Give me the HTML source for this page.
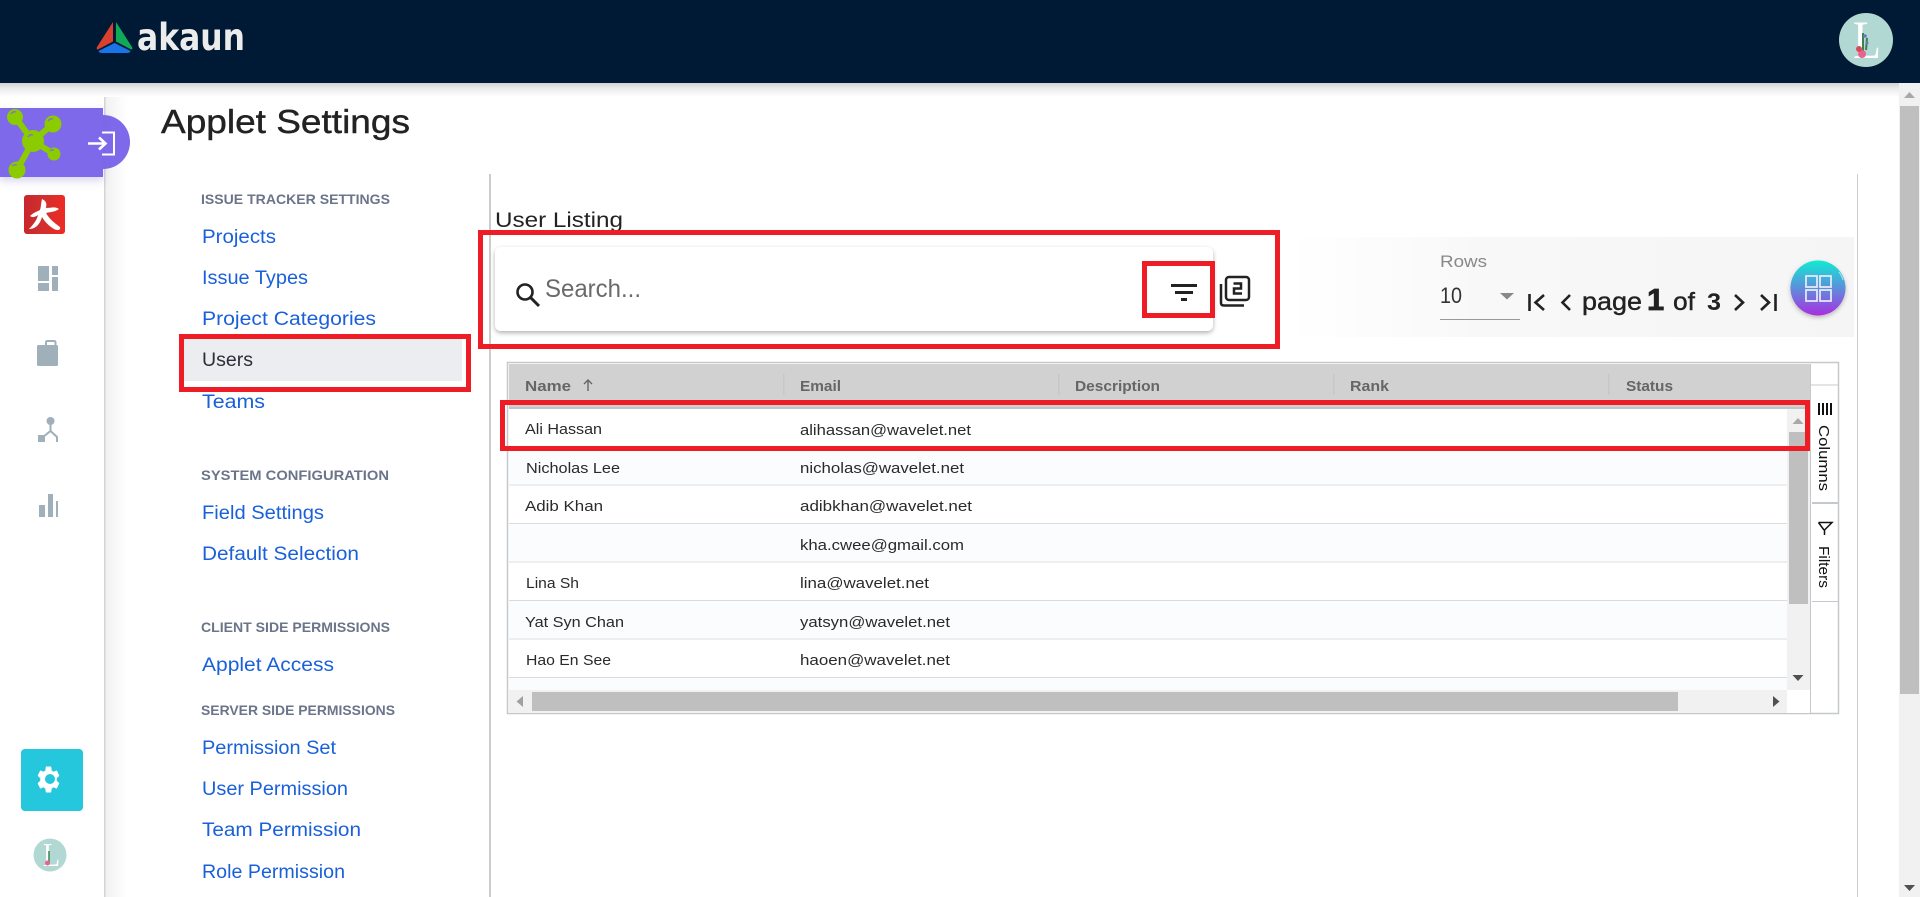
<!DOCTYPE html>
<html lang="en">
<head>
<meta charset="utf-8">
<title>Applet Settings</title>
<style>
html,body{margin:0;padding:0;background:#fff;width:1920px;height:897px;overflow:hidden}
svg{display:block;position:absolute;left:0;top:0}
text{font-family:"Liberation Sans",sans-serif;white-space:pre}
.h{font-size:14px;font-weight:700;fill:#6b7489}
.n{font-size:19px;fill:#1a60da}
.c{font-size:15px;fill:#2a2a2a}
.t{font-size:15px;font-weight:700;fill:#666}
.s{font-size:15px;fill:#111}
</style>
</head>
<body>
<svg width="1920" height="897" viewBox="0 0 1920 897" xmlns="http://www.w3.org/2000/svg">
<defs>
<linearGradient id="hs" x1="0" y1="0" x2="0" y2="1"><stop offset="0" stop-color="#d2d2d2"/><stop offset=".4" stop-color="#ececec"/><stop offset="1" stop-color="#fff"/></linearGradient>
<linearGradient id="ss" x1="0" y1="0" x2="1" y2="0"><stop offset="0" stop-color="#f1f1f1"/><stop offset="1" stop-color="#fff"/></linearGradient>
<linearGradient id="pg" x1="0" y1="0" x2="1" y2="0"><stop offset="0" stop-color="#fff"/><stop offset=".35" stop-color="#f8f8f8"/><stop offset="1" stop-color="#f5f5f5"/></linearGradient>
<linearGradient id="bt" x1="0" y1="0" x2="0" y2="1"><stop offset="0" stop-color="#10ecd2"/><stop offset=".5" stop-color="#5c8fdc"/><stop offset="1" stop-color="#a92ee0"/></linearGradient>
<linearGradient id="rd" x1="0" y1="0" x2="1" y2="0"><stop offset="0" stop-color="#c8262c"/><stop offset=".45" stop-color="#d0302f"/><stop offset="1" stop-color="#ee2b24"/></linearGradient>
<filter id="cs" x="-5%" y="-20%" width="110%" height="140%"><feDropShadow dx="0" dy="2" stdDeviation="2.5" flood-color="#000" flood-opacity=".3"/></filter>
<filter id="bs" x="-20%" y="-20%" width="140%" height="140%"><feDropShadow dx="0" dy="2" stdDeviation="2" flood-color="#000" flood-opacity=".25"/></filter>
<filter id="ps" x="-10%" y="-10%" width="120%" height="130%"><feDropShadow dx="0" dy="4" stdDeviation="4" flood-color="#6a5fc0" flood-opacity=".25"/></filter>
</defs>

<!-- sidebar + shadows -->
<rect x="105" y="83" width="22" height="814" fill="url(#ss)"/>
<rect x="104" y="83" width="1.5" height="814" fill="#d5d5d5"/>
<rect x="0" y="83" width="1920" height="14" fill="url(#hs)"/>

<!-- header -->
<rect x="0" y="0" width="1920" height="83" fill="#001a35"/>
<path d="M113 22 L97 47 Q96 49.500 98 49.500 L113 41.500Z" fill="#d8412f"/>
<path d="M116 22 L132 47 Q133 49.500 131 49.500 L116 41.500Z" fill="#0fa958"/>
<path d="M114.500 43 L130.500 51 Q130 53 127 53 L102 53 Q99 53 98.500 51Z" fill="#1b73e8"/>
<text x="137" y="50" font-size="37" font-weight="700" fill="#ececec" style="font-family:'DejaVu Sans',sans-serif" textLength="108" lengthAdjust="spacingAndGlyphs">akaun</text>
<circle cx="1866" cy="40" r="27" fill="#b2d8d3"/>
<text x="1853" y="58" font-size="54" fill="#fff" style="font-family:'Liberation Serif',serif" textLength="28" lengthAdjust="spacingAndGlyphs">L</text>
<path d="M1863 54 L1863 33 M1866 50 L1867 38" stroke="#3d8050" stroke-width="2" fill="none"/>
<circle cx="1862" cy="54" r="4" fill="#e8648c"/><circle cx="1859" cy="49" r="3" fill="#d84a5a"/><circle cx="1865" cy="36" r="1.800" fill="#6a78c0"/><circle cx="1867" cy="43" r="1.500" fill="#6a78c0"/>

<!-- sidebar active -->
<path d="M103 115 A27 27 0 0 1 103 169Z" fill="#7d69ea"/>
<rect x="0" y="108" width="103" height="69" fill="#7d69ea" filter="url(#ps)"/>
<g stroke="#8ccb00" stroke-width="6" stroke-linecap="round">
<path d="M15 117 L33 141 M53 124 L33 141 M54 154 L33 141 M17 170 L33 141"/>
</g>
<g fill="#8ccb00"><circle cx="33" cy="141" r="11"/><circle cx="15" cy="117" r="8"/><circle cx="53" cy="124" r="8.500"/><circle cx="54" cy="154" r="6.500"/><circle cx="17" cy="170" r="8.500"/></g>
<g fill="none" stroke="#7d69ea" stroke-width="1.400" opacity=".85"><path d="M11 114 Q13 111 16 112"/><path d="M48 121 Q50 118 53 119"/><path d="M28 137 Q30 134 33 135"/><path d="M50 151 Q52 149 54 150"/><path d="M12 166 Q14 164 17 165"/></g>
<path d="M88 143.500 H105 M99 137.500 L105.500 143.500 L99 149.500" fill="none" stroke="#fff" stroke-width="2.600"/>
<path d="M102 132.500 H114 V154.500 H102" fill="none" stroke="#fff" stroke-width="2"/>

<!-- red app icon -->
<rect x="24" y="195" width="41" height="39" rx="3" fill="url(#rd)"/>
<path d="M42 199 C46 201 47 203 46 208 C51 208 55 206 59 209 C55 212 50 212 46 213 C50 220 56 224 60 227 C61 230 58 231 54 229 C49 226 45 222 42 217 C40 224 36 229 29 229 C33 225 37 220 38 215 C35 217 33 218 30 216 C33 213 36 212 40 210 C41 207 41 203 42 199Z" fill="#fff"/>

<!-- nav icons -->
<g fill="#9fb0bb">
<rect x="38" y="266" width="11" height="15"/><rect x="52" y="266" width="6" height="9"/><rect x="38" y="283" width="11" height="8"/><rect x="52" y="277" width="6" height="14"/>
<rect x="37" y="345" width="21" height="21" rx="1.500"/>
<circle cx="50.500" cy="421" r="4"/><rect x="38" y="435" width="7" height="7"/>
<rect x="39" y="505" width="6" height="12"/><rect x="48" y="494" width="5" height="23"/><rect x="56" y="501" width="2" height="16"/>
</g>
<path d="M46 345 V342.500 Q46 341 47.500 341 H54 Q55.500 341 55.500 342.500 V345" fill="none" stroke="#9fb0bb" stroke-width="2"/>
<path d="M50.500 424 V431 M43 437 L50.500 431 L57 437 V442" fill="none" stroke="#9fb0bb" stroke-width="2"/>

<!-- settings btn -->
<rect x="21" y="749" width="62" height="62" rx="4" fill="#25c7dc"/>
<path transform="translate(48.500,779.500) scale(1.150,1.350) translate(-12,-12)" fill="#fff" d="M19.14 12.94c.04-.3.06-.61.06-.94 0-.32-.02-.64-.07-.94l2.03-1.58c.18-.14.23-.41.12-.61l-1.92-3.32c-.12-.22-.37-.29-.59-.22l-2.39.96c-.5-.38-1.03-.7-1.62-.94l-.36-2.54c-.04-.24-.24-.41-.48-.41h-3.84c-.24 0-.43.17-.47.41l-.36 2.54c-.59.24-1.13.57-1.62.94l-2.39-.96c-.22-.08-.47 0-.59.22L2.74 8.87c-.12.21-.08.47.12.61l2.03 1.58c-.05.3-.09.63-.09.94s.02.64.07.94l-2.03 1.58c-.18.14-.23.41-.12.61l1.92 3.32c.12.22.37.29.59.22l2.39-.96c.5.38 1.03.7 1.62.94l.36 2.54c.05.24.24.41.48.41h3.84c.24 0 .44-.17.47-.41l.36-2.54c.59-.24 1.13-.56 1.62-.94l2.39.96c.22.08.47 0 .59-.22l1.92-3.32c.12-.22.07-.47-.12-.61l-2.01-1.58z"/>
<circle cx="50" cy="779" r="5" fill="#25c7dc"/>
<circle cx="50" cy="855" r="16.500" fill="#b2d8d3"/>
<text x="43" y="866" font-size="34" fill="#fff" style="font-family:'Liberation Serif',serif" textLength="17" lengthAdjust="spacingAndGlyphs">L</text>
<path d="M49 864 V851" stroke="#3d8050" stroke-width="1.500"/><circle cx="47.500" cy="863" r="2.500" fill="#e8648c"/>

<!-- page title -->
<text x="161" y="133" font-size="33" fill="#222" stroke="#222" stroke-width=".4" textLength="249" lengthAdjust="spacingAndGlyphs">Applet Settings</text>

<!-- left menu -->
<rect x="184" y="339" width="278" height="42" fill="#ecedf1"/>
<text class="h" x="201" y="204" textLength="189" lengthAdjust="spacingAndGlyphs">ISSUE TRACKER SETTINGS</text>
<text class="n" x="202" y="243" textLength="74" lengthAdjust="spacingAndGlyphs">Projects</text>
<text class="n" x="202" y="284" textLength="106" lengthAdjust="spacingAndGlyphs">Issue Types</text>
<text class="n" x="202" y="325" textLength="174" lengthAdjust="spacingAndGlyphs">Project Categories</text>
<text class="n" x="202" y="366" style="fill:#2a2f3a" textLength="51" lengthAdjust="spacingAndGlyphs">Users</text>
<text class="n" x="202" y="408" textLength="63" lengthAdjust="spacingAndGlyphs">Teams</text>
<text class="h" x="201" y="480" textLength="188" lengthAdjust="spacingAndGlyphs">SYSTEM CONFIGURATION</text>
<text class="n" x="202" y="519" textLength="122" lengthAdjust="spacingAndGlyphs">Field Settings</text>
<text class="n" x="202" y="560" textLength="157" lengthAdjust="spacingAndGlyphs">Default Selection</text>
<text class="h" x="201" y="632" textLength="189" lengthAdjust="spacingAndGlyphs">CLIENT SIDE PERMISSIONS</text>
<text class="n" x="202" y="671" textLength="132" lengthAdjust="spacingAndGlyphs">Applet Access</text>
<text class="h" x="201" y="715" textLength="194" lengthAdjust="spacingAndGlyphs">SERVER SIDE PERMISSIONS</text>
<text class="n" x="202" y="754" textLength="134" lengthAdjust="spacingAndGlyphs">Permission Set</text>
<text class="n" x="202" y="795" textLength="146" lengthAdjust="spacingAndGlyphs">User Permission</text>
<text class="n" x="202" y="836" textLength="159" lengthAdjust="spacingAndGlyphs">Team Permission</text>
<text class="n" x="202" y="878" textLength="143" lengthAdjust="spacingAndGlyphs">Role Permission</text>

<!-- dividers -->
<rect x="489" y="174" width="2" height="723" fill="#ccc"/>
<rect x="1857" y="174" width="1" height="723" fill="#ccc"/>

<!-- heading -->
<text x="495" y="227" font-size="21" fill="#222" textLength="128" lengthAdjust="spacingAndGlyphs">User Listing</text>

<!-- search card -->
<rect x="495" y="247" width="718" height="84" rx="6" fill="#fff" filter="url(#cs)"/>
<circle cx="525" cy="292" r="7.500" fill="none" stroke="#222" stroke-width="2.600"/>
<path d="M530.500 297.500 L539 306" stroke="#222" stroke-width="3"/>
<text x="545" y="297" font-size="25" fill="#6a6a6a" textLength="96" lengthAdjust="spacingAndGlyphs">Search...</text>
<g fill="#222"><rect x="1171" y="284" width="26" height="3"/><rect x="1175" y="291" width="18" height="3"/><rect x="1181" y="298" width="6" height="3"/></g>
<rect x="1226" y="277" width="23" height="23" rx="3" fill="none" stroke="#222" stroke-width="2.500"/>
<path d="M1221 284 V303 Q1221 305.500 1224 305.500 H1244" fill="none" stroke="#222" stroke-width="2.500"/>
<path d="M1233.500 283.500 H1241 V288.500 H1234 V293.500 H1242" fill="none" stroke="#222" stroke-width="2.500"/>

<!-- pagination -->
<rect x="1290" y="237" width="564" height="100" fill="url(#pg)"/>
<text x="1440" y="267" font-size="17" fill="#888" textLength="47" lengthAdjust="spacingAndGlyphs">Rows</text>
<text x="1440" y="303" font-size="22" fill="#333" textLength="22" lengthAdjust="spacingAndGlyphs">10</text>
<path d="M1500 293 H1514 L1507 299.500Z" fill="#888"/>
<rect x="1440" y="319" width="80" height="1" fill="#999"/>
<g fill="none" stroke="#222" stroke-width="2.600">
<path d="M1529.500 294 V311 M1544 295 L1535.500 302.500 L1544 310"/>
<path d="M1570 295 L1562.500 302.500 L1570 310"/>
<path d="M1735 295 L1743 302.500 L1735 310"/>
<path d="M1761 295 L1769 302.500 L1761 310 M1775.500 294 V311"/>
</g>
<text x="1582" y="310" font-size="25" fill="#222" stroke="#222" stroke-width=".4" textLength="60" lengthAdjust="spacingAndGlyphs">page</text>
<text x="1647" y="310" font-size="31" font-weight="700" fill="#222" stroke="#222" stroke-width=".8">1</text>
<text x="1673" y="310" font-size="25" fill="#222" stroke="#222" stroke-width=".4" textLength="22" lengthAdjust="spacingAndGlyphs">of</text>
<text x="1707" y="310" font-size="24" font-weight="700" fill="#222" textLength="14" lengthAdjust="spacingAndGlyphs">3</text>
<circle cx="1818" cy="288" r="27.500" fill="url(#bt)" filter="url(#bs)"/>
<path d="M1839 272 Q1842 276 1843 280" fill="none" stroke="#fff" stroke-opacity=".6" stroke-width="1"/>
<g fill="none" stroke="#e4e8f8" stroke-width="1.800"><rect x="1806" y="276" width="11" height="11"/><rect x="1820" y="276" width="11" height="11"/><rect x="1806" y="290" width="11" height="11"/><rect x="1820" y="290" width="11" height="11"/></g>

<!-- table -->
<rect x="507.500" y="362.500" width="1331" height="351" fill="#fff" stroke="#c5c9cd" stroke-width="1.500"/>
<rect x="509" y="364" width="1301" height="44" fill="#d1d1d1"/>
<rect x="509" y="407" width="1301" height="2" fill="#bfc5cb"/>
<g fill="#c2c8ce"><rect x="783" y="374" width="1.500" height="21"/><rect x="1058" y="374" width="1.500" height="21"/><rect x="1333" y="374" width="1.500" height="21"/><rect x="1608" y="374" width="1.500" height="21"/></g>
<text class="t" x="525" y="391" textLength="46" lengthAdjust="spacingAndGlyphs">Name</text>
<path d="M588 391 V380 M584 384 L588 380 L592 384" fill="none" stroke="#666" stroke-width="1.400"/>
<text class="t" x="800" y="391" textLength="41" lengthAdjust="spacingAndGlyphs">Email</text>
<text class="t" x="1075" y="391" textLength="85" lengthAdjust="spacingAndGlyphs">Description</text>
<text class="t" x="1350" y="391" textLength="39" lengthAdjust="spacingAndGlyphs">Rank</text>
<text class="t" x="1626" y="391" textLength="47" lengthAdjust="spacingAndGlyphs">Status</text>

<!-- rows -->
<rect x="509" y="447" width="1278" height="38" fill="#fbfcfe"/>
<rect x="509" y="524" width="1278" height="38" fill="#fbfcfe"/>
<rect x="509" y="601" width="1278" height="38" fill="#fbfcfe"/>
<rect x="509" y="678" width="1278" height="12" fill="#fbfcfe"/>
<g><rect x="509" y="484" width="1278" height="2" fill="#eceef0"/><rect x="509" y="523" width="1278" height="1" fill="#d9dbde"/><rect x="509" y="561" width="1278" height="2" fill="#eceef0"/><rect x="509" y="600" width="1278" height="1" fill="#d9dbde"/><rect x="509" y="638" width="1278" height="2" fill="#eceef0"/><rect x="509" y="677" width="1278" height="1" fill="#d9dbde"/></g>
<text class="c" x="525" y="434" textLength="77" lengthAdjust="spacingAndGlyphs">Ali Hassan</text>
<text class="c" x="800" y="435" textLength="171" lengthAdjust="spacingAndGlyphs">alihassan@wavelet.net</text>
<text class="c" x="526" y="473" textLength="94" lengthAdjust="spacingAndGlyphs">Nicholas Lee</text>
<text class="c" x="800" y="473" textLength="164" lengthAdjust="spacingAndGlyphs">nicholas@wavelet.net</text>
<text class="c" x="525" y="511" textLength="78" lengthAdjust="spacingAndGlyphs">Adib Khan</text>
<text class="c" x="800" y="511" textLength="172" lengthAdjust="spacingAndGlyphs">adibkhan@wavelet.net</text>
<text class="c" x="800" y="550" textLength="164" lengthAdjust="spacingAndGlyphs">kha.cwee@gmail.com</text>
<text class="c" x="526" y="588" textLength="53" lengthAdjust="spacingAndGlyphs">Lina Sh</text>
<text class="c" x="800" y="588" textLength="129" lengthAdjust="spacingAndGlyphs">lina@wavelet.net</text>
<text class="c" x="525" y="627" textLength="99" lengthAdjust="spacingAndGlyphs">Yat Syn Chan</text>
<text class="c" x="800" y="627" textLength="150" lengthAdjust="spacingAndGlyphs">yatsyn@wavelet.net</text>
<text class="c" x="526" y="665" textLength="85" lengthAdjust="spacingAndGlyphs">Hao En See</text>
<text class="c" x="800" y="665" textLength="150" lengthAdjust="spacingAndGlyphs">haoen@wavelet.net</text>

<!-- vertical scrollbar -->
<rect x="1787" y="409" width="23" height="281" fill="#f1f1f1"/>
<rect x="1789" y="432" width="19" height="172" fill="#bfbfbf"/>
<path d="M1792.500 424 L1798 418 L1803.500 424Z" fill="#a8a8a8"/>
<path d="M1792.500 675 L1798 681 L1803.500 675Z" fill="#505050"/>
<!-- horizontal scrollbar -->
<rect x="509" y="690" width="1278" height="23" fill="#f1f1f1"/>
<rect x="532" y="692" width="1146" height="19" fill="#bfbfbf"/>
<path d="M523 696 L516.500 701.500 L523 707Z" fill="#a0a0a0"/>
<path d="M1773 696 L1779.500 701.500 L1773 707Z" fill="#505050"/>
<rect x="1787" y="690" width="23" height="23" fill="#fff"/>

<!-- tool panel -->
<rect x="1810" y="364" width="1" height="349" fill="#c5c9cd"/>
<rect x="1811" y="384.500" width="27" height="1" fill="#c5c9cd"/>
<rect x="1812" y="502" width="26" height="2" fill="#c5c9cd"/>
<rect x="1812" y="601" width="26" height="1" fill="#c5c9cd"/>
<g fill="#111"><rect x="1818" y="403" width="2" height="12"/><rect x="1822" y="403" width="2" height="12"/><rect x="1826" y="403" width="2" height="12"/><rect x="1830" y="403" width="2" height="12"/></g>
<text class="s" transform="translate(1819,425) rotate(90)" textLength="66" lengthAdjust="spacingAndGlyphs">Columns</text>
<path d="M1818.500 522.500 H1832 L1824.500 530 V535" fill="none" stroke="#111" stroke-width="1.500"/>
<path d="M1818.500 522.500 L1824 530" fill="none" stroke="#111" stroke-width="1.500"/>
<text class="s" transform="translate(1819,546) rotate(90)" textLength="42" lengthAdjust="spacingAndGlyphs">Filters</text>

<!-- red annotation boxes -->
<g fill="none" stroke="#ee1c25" stroke-width="5">
<rect x="181.500" y="336.500" width="287" height="53"/>
<rect x="480.500" y="232.500" width="797" height="114"/>
<rect x="1144.500" y="263.500" width="68" height="52"/>
<rect x="502.500" y="402.500" width="1305" height="46"/>
</g>

<!-- page scrollbar -->
<rect x="1899" y="83" width="21" height="814" fill="#f1f1f1"/>
<rect x="1900" y="106" width="19" height="588" fill="#bfbfbf"/>
<path d="M1904 98 L1909.500 92 L1915 98Z" fill="#a8a8a8"/>
<path d="M1904 885 L1909.500 891 L1915 885Z" fill="#505050"/>
</svg>
</body>
</html>
